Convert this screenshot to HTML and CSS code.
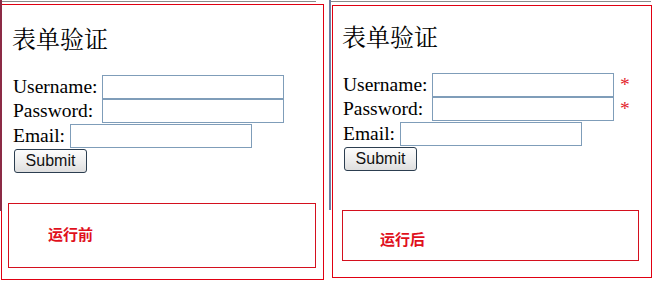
FILE: index.html
```html
<!DOCTYPE html>
<html lang="zh-CN">
<head>
<meta charset="utf-8">
<title>表单验证</title>
<link rel="stylesheet" href="styles.css">
</head>
<body>
<div class="page">
  <div class="shot shot-before">
    <div class="frame">
      <h2 class="title">表单验证</h2>
      <form class="form">
        <div class="row"><span class="lbl lbl-wide">Username:</span><input class="field" type="text"></div>
        <div class="row"><span class="lbl lbl-wide">Password:</span><input class="field" type="password"></div>
        <div class="row row-gap"><span class="lbl">Email:</span><input class="field" type="text"></div>
        <div class="row row-gap"><button class="submit" type="button">Submit</button></div>
      </form>
      <div class="note"><span class="note-text">运行前</span></div>
    </div>
  </div>
  <div class="shot shot-after">
    <div class="frame">
      <h2 class="title">表单验证</h2>
      <form class="form">
        <div class="row"><span class="lbl lbl-wide">Username:</span><input class="field" type="text"><span class="req">*</span></div>
        <div class="row"><span class="lbl lbl-wide">Password:</span><input class="field" type="password"><span class="req">*</span></div>
        <div class="row row-gap"><span class="lbl">Email:</span><input class="field" type="text"></div>
        <div class="row row-gap"><button class="submit" type="button">Submit</button></div>
      </form>
      <div class="note"><span class="note-text">运行后</span></div>
    </div>
  </div>
</div>
</body>
</html>
```
FILE: styles.css
```css
* { box-sizing: border-box; }
html, body { margin: 0; padding: 0; background: #fff; }
body {
  font-family: "Liberation Serif", "Times New Roman", serif;
  color: #000;
  width: 662px;
  height: 291px;
  overflow: hidden;
}
.page {
  display: flex;
  align-items: flex-start;
}
.shot {
  position: relative;
}
.shot::before {
  content: "";
  position: absolute;
  top: 1px;
  height: 1px;
  background: #8a8a8a;
}
.shot::after {
  content: "";
  position: absolute;
  top: 0;
  width: 2px;
}
.shot-before {
  width: 329px;
  padding-top: 4px;
}
.shot-before::before { left: 0; width: 316px; }
.shot-before::after { left: 0; height: 211px; background: #8c2a45; }
.shot-after {
  width: 333px;
  padding-top: 5px;
  padding-left: 3px;
}
.shot-after::before { left: 2px; width: 320px; }
.shot-after::after { left: 0; height: 210px; background: #6f7fa3; }

.frame {
  border: 1px solid #e00012;
}
.shot-before .frame {
  margin-left: 1px;
  width: 323px;
  padding: 0 6px 11px 6px;
}
.shot-after .frame {
  width: 320px;
  padding: 0 11px 16px 9px;
}
.title {
  font-family: "Noto Serif CJK SC", "Noto Sans CJK SC", "Liberation Serif", serif;
  font-weight: normal;
  font-size: 24px;
  line-height: 28px;
  margin: 0;
}
.shot-before .title { margin: 19px 0 0 4px; }
.shot-after .title { margin: 16px 0 0 0; }

.form { margin: 0; }
.shot-before .form { margin: 23px 0 0 5px; }
.shot-after .form { margin: 23px 0 0 1px; }

.row {
  display: flex;
  align-items: center;
  height: 24px;
}
.row-gap { margin-top: 1px; }
.lbl {
  font-size: 19.5px;
  line-height: 24px;
  margin-right: 5px;
  white-space: nowrap;
}
.lbl-wide { width: 89px; margin-right: 0; }
.field {
  width: 182px;
  height: 24px;
  border: 1px solid #7f9db9;
  padding: 0 2px;
  margin: 0;
  background: #fff;
  font: inherit;
}
.req {
  color: #e3262e;
  font-size: 19.5px;
  line-height: 24px;
  margin-left: 6px;
}
.submit {
  width: 73px;
  height: 24px;
  margin: 0 0 0 1px;
  padding: 0;
  font-family: "Liberation Sans", Arial, sans-serif;
  font-size: 16px;
  color: #111;
  border: 1px solid #2c3e50;
  border-radius: 3px;
  background: linear-gradient(#fdfdfd, #ececec 60%, #dedede);
}
.note {
  border: 1px solid #d4101e;
}
.shot-before .note {
  margin-top: 30px;
  width: 308px;
  padding: 22px 0 26px 39px;
}
.shot-after .note {
  margin-top: 39px;
  width: 297px;
  padding: 20px 0 14px 37px;
}
.note-text {
  display: block;
  font-family: "Noto Sans CJK SC", sans-serif;
  font-weight: bold;
  font-size: 15px;
  line-height: 15px;
  color: #e0101c;
}
```
